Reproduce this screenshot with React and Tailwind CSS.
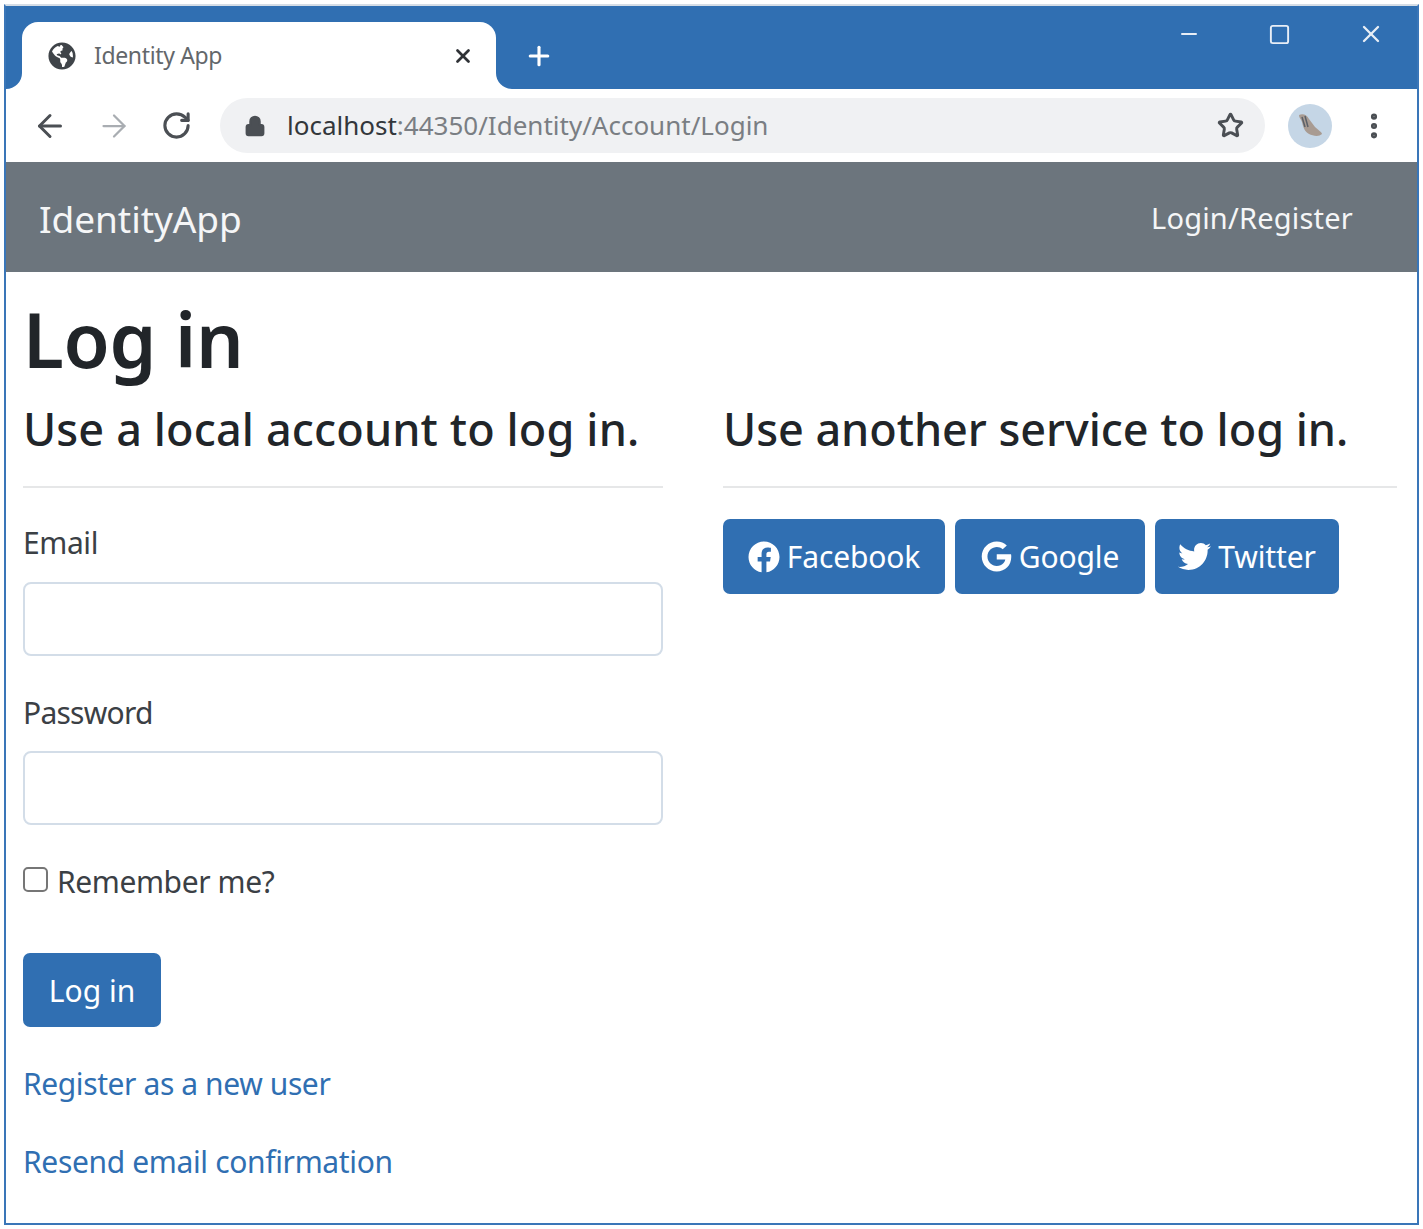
import { ArrowLeft, ArrowRight, RotateCw, Star, Lock, X, Plus, Minus, Square, MoreVertical } from "lucide-react";
import { FaFacebook, FaGoogle, FaTwitter, FaGlobeAmericas } from "react-icons/fa";

function TabFlare({ side }) {
  // concave corner at the bottom of the active tab
  const d = side === "left" ? "M16 0 V16 H0 A16 16 0 0 0 16 0 Z" : "M0 0 V16 H16 A16 16 0 0 1 0 0 Z";
  return (
    <svg width="16" height="16" viewBox="0 0 16 16" className={side === "left" ? "absolute bottom-0 -left-[16px]" : "absolute bottom-0 -right-[16px]"}>
      <path d={d} fill="#ffffff" />
    </svg>
  );
}

function SocialButton({ icon, label, width }) {
  return (
    <button className={`h-[75px] ${width} flex items-center justify-center gap-[7px] bg-[#306fb2] text-white rounded-[7px] text-[30px] tracking-[-0.15px]`}>
      {icon}
      <span>{label}</span>
    </button>
  );
}

export default function App() {
  return (
    <div className="w-[1423px] h-[1229px] bg-white p-[4px] font-['Noto_Sans','Open_Sans',sans-serif]">
      <div className="w-[1415px] h-[1221px] border-2 border-[#3a76b8] border-t-[#d5dde6] flex flex-col overflow-hidden">
        {/* title bar */}
        <div className="h-[83px] shrink-0 bg-[#306fb2] flex items-end pl-[16px]">
          <div className="relative w-[474px] h-[67px] bg-white rounded-t-[16px] flex items-center pl-[26px] pr-[22px]">
            <TabFlare side="left" />
            <TabFlare side="right" />
            <FaGlobeAmericas size={28} className="text-[#3f4449] shrink-0" />
            <span className="ml-[18px] text-[23px] tracking-[-0.35px] text-[#63676b] flex-1">Identity App</span>
            <X size={22} strokeWidth={3} className="text-[#2f3236]" />
          </div>
          <div className="h-[67px] flex items-center ml-[28px]">
            <Plus size={30} strokeWidth={2.5} className="text-white" />
          </div>
          <div className="ml-auto self-start flex items-center text-[#e8eef6] pt-[14px] pr-[1px]">
            <div className="w-[91px] flex justify-center"><Minus size={24} strokeWidth={2} /></div>
            <div className="w-[91px] flex justify-center"><Square size={23} strokeWidth={2} /></div>
            <div className="w-[91px] flex justify-center"><X size={28} strokeWidth={2} /></div>
          </div>
        </div>
        {/* toolbar */}
        <div className="h-[73px] shrink-0 bg-white flex items-center pl-[26px]">
          <ArrowLeft size={36} strokeWidth={2} className="text-[#4b4f54]" />
          <ArrowRight size={36} strokeWidth={1.5} className="text-[#a9adb2] ml-[28px]" />
          <RotateCw size={31} strokeWidth={2.4} className="text-[#4b4f54] ml-[29px]" />
          <div className="ml-[28px] w-[1045px] h-[55px] bg-[#f0f1f3] rounded-full flex items-center pl-[24px] pr-[21px]">
            <Lock size={22} strokeWidth={2.5} fill="#4b4f54" className="text-[#4b4f54]" />
            <div className="ml-[21px] flex-1 text-[26px] tracking-[0px] text-[#7a7e83]">
              <span className="text-[#33373b]">localhost</span>:44350/Identity/Account/Login
            </div>
            <Star size={27} strokeWidth={2.6} className="text-[#4b4f54]" />
          </div>
          <div className="ml-[23px] w-[44px] h-[44px] rounded-full bg-[#c5d6e6] flex items-center justify-center shrink-0">
            <svg width="30" height="26" viewBox="0 0 30 26">
              <path d="M4 2 C8 0 12 2 14 6 L20 14 C23 17 27 19 27 21 C24 24 18 23 14 21 C10 19 8 14 7 9 C6 6 4 5 4 2 Z" fill="#a89b92" />
              <path d="M7 4 L10 14 M10 3 L13 14" stroke="#5b6068" strokeWidth="1.5" />
            </svg>
          </div>
          <MoreVertical size={32} strokeWidth={2.6} className="text-[#4b4f54] ml-[26px]" />
        </div>
        {/* navbar */}
        <div className="h-[110px] shrink-0 bg-[#6c757d] flex items-center justify-between pl-[33px] pr-[64px] text-[#f5f6f7]">
          <span className="text-[37px] tracking-[-0.05px] mt-[4px]">IdentityApp</span>
          <span className="text-[29px] tracking-[0.2px] mt-[2px]">Login/Register</span>
        </div>
        {/* page */}
        <div className="flex-1 bg-white px-[17px] text-[#212529]">
          <h1 className="text-[75px] leading-[90px] font-semibold -tracking-[0.4px] mt-[22px]">Log in</h1>
          <div className="grid grid-cols-[640px_674px] gap-x-[60px] mt-[18px]">
            <div>
              <h4 className="text-[45px] leading-[54px] font-medium tracking-[0.13px]">Use a local account to log in.</h4>
              <div className="h-[2px] bg-[#e6e7e8] mt-[30px]"></div>
              <label className="block text-[30px] leading-[44px] mt-[33px] tracking-[-0.4px] text-[#3b4045]">Email</label>
              <input className="block w-full h-[74px] mt-[17px] border-2 border-[#d3dde8] rounded-[8px]" />
              <label className="block text-[30px] leading-[44px] mt-[35px] tracking-[-0.75px] text-[#3b4045]">Password</label>
              <input type="password" className="block w-full h-[74px] mt-[16px] border-2 border-[#d3dde8] rounded-[8px]" />
              <div className="flex items-center mt-[34px] h-[44px]">
                <span className="w-[25px] h-[25px] border-2 border-[#767676] rounded-[5px] mb-[4px]"></span>
                <span className="ml-[9px] text-[30px] tracking-[-0.4px] text-[#3b4045]">Remember me?</span>
              </div>
              <button className="block w-[138px] h-[74px] mt-[50px] bg-[#306fb2] text-white text-[30px] rounded-[7px]">Log in</button>
              <a className="block text-[#306fb2] text-[30px] leading-[44px] mt-[35px] tracking-[-0.4px]">Register as a new user</a>
              <a className="block text-[#306fb2] text-[30px] leading-[44px] mt-[34px] tracking-[-0.35px]">Resend email confirmation</a>
            </div>
            <div>
              <h4 className="text-[45px] leading-[54px] font-medium -tracking-[0.05px]">Use another service to log in.</h4>
              <div className="h-[2px] bg-[#e6e7e8] mt-[30px]"></div>
              <div className="flex gap-[10px] mt-[31px]">
                <SocialButton icon={<FaFacebook size={32} />} label="Facebook" width="w-[222px]" />
                <SocialButton icon={<FaGoogle size={31} />} label="Google" width="w-[190px]" />
                <SocialButton icon={<FaTwitter size={33} />} label="Twitter" width="w-[184px]" />
              </div>
            </div>
          </div>
        </div>
      </div>
    </div>
  );
}
